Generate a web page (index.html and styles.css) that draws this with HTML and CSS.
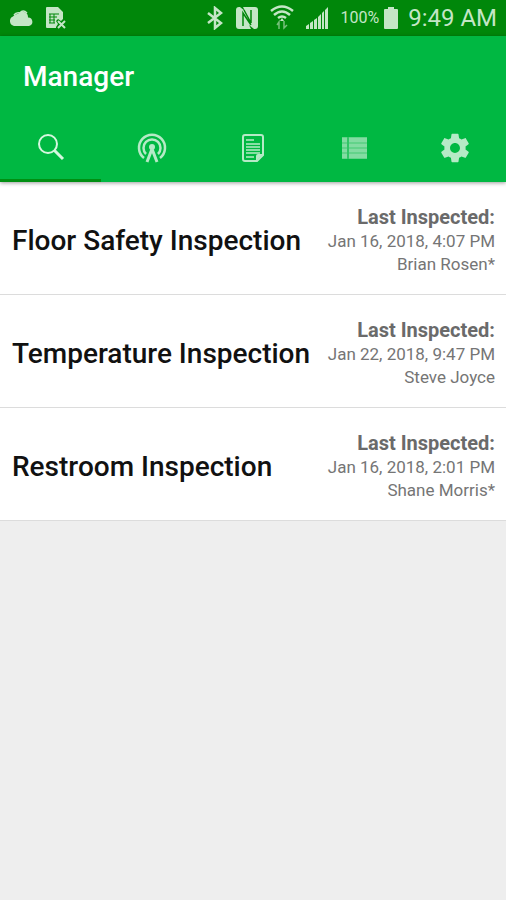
FILE: index.html
```html
<!DOCTYPE html>
<html lang="en">
<head>
    <meta charset="UTF-8">
    <meta name="viewport" content="width=device-width, initial-scale=1.0">
    <title>Manager</title>
    <link rel="stylesheet" href="styles.css">
</head>
<body>
    <div class="status-bar">
        <div class="status-left">
            <svg width="24" height="24" viewBox="0 0 24 24" fill="currentColor">
                <path d="M5 20a5 5 0 0 1-1-9.5a5 5 0 0 1 5-2.5a5.5 5.5 0 0 1 10 3.5a4.3 4.3 0 0 1 1 8.5z"></path>
                <path d="M5 9q2-3 6-2q3-4 7 0" fill="none" stroke="currentColor" stroke-width="1.5"></path>
            </svg>
            <svg width="24" height="24" viewBox="0 0 24 24">
                <path fill="currentColor" d="M4 1h11l5 5v7l-2 2l-3-2l-2 2l2 3l-2 3v1H4a1 1 0 0 1-1-1V2a1 1 0 0 1 1-1z"></path>
                <path d="M6 8h10M6 11h8M6 14h6M6 17h6M7 8v9M11 8v9" fill="none" stroke="#00870a" stroke-width="1"></path>
                <path d="M15 15l7 7M22 15l-7 7" fill="none" stroke="currentColor" stroke-width="2"></path>
            </svg>
        </div>
        <div class="status-right">
            <svg width="18" height="24" viewBox="0 0 18 24" fill="none" stroke="currentColor" stroke-width="2.5">
                <path d="M2 7l13 10l-6 5V2l6 5L2 17"></path>
            </svg>
            <svg width="24" height="24" viewBox="0 0 24 24">
                <rect x="1" y="1" width="22" height="22" rx="3" fill="currentColor"></rect>
                <path d="M8 20V7l8 12M16 4v13L9 4" fill="none" stroke="#00870a" stroke-width="1.5"></path>
                <path d="M5 1h3l2 4zM14 19l5 4h-3z" fill="#00870a"></path>
            </svg>
            <svg width="24" height="26" viewBox="0 0 24 26" fill="none" stroke="currentColor" stroke-width="2.5">
                <path d="M1 6q11-9 22 0M4 10q8-7 16 0M8 13q4-3 8 0"></path>
                <path d="M12 13l2 3h-4z" fill="currentColor" stroke="none"></path>
                <path d="M9 24v-7l-2 3M14 16v7l3-3" stroke-width="1.5" opacity="0.6"></path>
            </svg>
            <svg width="24" height="24" viewBox="0 0 24 24" fill="currentColor">
                <path d="M1 23v-3l3-2v5zM5 23v-6l3-2v8zM9 23v-9l3-2v11zM13 23V11l3-3v15zM17 23V7l2-2v18zM20 23V4l3-3v22z"></path>
            </svg>
            <span class="battery-level">100%</span>
            <svg width="16" height="24" viewBox="0 0 16 24" fill="currentColor">
                <path d="M5 1h6v2h3a1 1 0 0 1 1 1v18a1 1 0 0 1-1 1H2a1 1 0 0 1-1-1V4a1 1 0 0 1 1-1h3z"></path>
            </svg>
            <span class="clock">9:49 AM</span>
        </div>
    </div>

    <header class="header">
        <h1>Manager</h1>
        <nav class="tabs">
            <a class="tab active" href="#search" aria-label="Search">
                <svg width="32" height="32" viewBox="0 0 32 32" fill="none" stroke="currentColor">
                    <circle cx="13" cy="12" r="9" stroke-width="2"></circle>
                    <path d="M19 18l9 9" stroke-width="3"></path>
                </svg>
            </a>
            <a class="tab" href="#beacons" aria-label="Beacons">
                <svg width="32" height="32" viewBox="0 0 32 32" fill="none" stroke="currentColor" stroke-width="2.5">
                    <path d="M8 26A13 13 0 1 1 24 26"></path>
                    <path d="M10 22A8.5 8.5 0 1 1 22 22"></path>
                    <path d="M11 30l5-13l5 13" stroke-width="3"></path>
                    <circle cx="16" cy="15" r="3" fill="currentColor" stroke="none"></circle>
                </svg>
            </a>
            <a class="tab" href="#reports" aria-label="Reports">
                <svg width="32" height="32" viewBox="0 0 32 32" fill="none" stroke="currentColor" stroke-width="2">
                    <path d="M8 3h16a2 2 0 0 1 2 2v18l-6 6H8a2 2 0 0 1-2-2V5a2 2 0 0 1 2-2z"></path>
                    <path d="M9 8h8M9 12h14M9 15h14M9 18h14M9 21h14M9 25h8" stroke-width="1.5"></path>
                    <path d="M19 29v-5q0-2 2-2h5z" fill="currentColor" stroke="none"></path>
                </svg>
            </a>
            <a class="tab" href="#list" aria-label="List">
                <svg width="32" height="32" viewBox="0 0 32 32" fill="currentColor">
                    <path d="M4 5h25v22H4z" opacity="0.55"></path>
                    <path d="M4 6h5v4H4zM4 12h5v3H4zM4 17h5v3H4zM4 22h5v4H4zM11 6h18v4H11zM11 12h18v3H11zM11 17h18v3H11zM11 22h18v4H11z" opacity="0.4"></path>
                    <path d="M9 5h2v22H9z" fill="#00b842" opacity="0.5"></path>
                </svg>
            </a>
            <a class="tab" href="#settings" aria-label="Settings">
                <svg width="34" height="34" viewBox="0 0 24 24" fill="currentColor">
                    <path d="M19.43 12.98c.04-.32.07-.64.07-.98s-.03-.66-.07-.98l2.11-1.65c.19-.15.24-.42.12-.64l-2-3.46c-.12-.22-.39-.3-.61-.22l-2.49 1c-.52-.4-1.08-.73-1.69-.98l-.38-2.65C14.46 2.18 14.25 2 14 2h-4c-.25 0-.46.18-.49.42l-.38 2.65c-.61.25-1.17.59-1.69.98l-2.49-1c-.23-.09-.49 0-.61.22l-2 3.46c-.13.22-.07.49.12.64l2.11 1.65c-.04.32-.07.65-.07.98s.03.66.07.98l-2.11 1.65c-.19.15-.24.42-.12.64l2 3.46c.12.22.39.3.61.22l2.49-1c.52.4 1.08.73 1.69.98l.38 2.65c.03.24.24.42.49.42h4c.25 0 .46-.18.49-.42l.38-2.65c.61-.25 1.17-.59 1.69-.98l2.49 1c.23.09.49 0 .61-.22l2-3.46c.12-.22.07-.49-.12-.64l-2.11-1.65zM12 15.5c-1.93 0-3.5-1.57-3.5-3.5s1.57-3.5 3.5-3.5 3.5 1.57 3.5 3.5-1.57 3.5-3.5 3.5z"></path>
                </svg>
            </a>
        </nav>
    </header>

    <main class="inspections">
        <div class="inspection">
            <h2>Floor Safety Inspection</h2>
            <div class="details">
                <strong>Last Inspected:</strong>
                <p>Jan 16, 2018, 4:07 PM</p>
                <p>Brian Rosen*</p>
            </div>
        </div>
        <div class="inspection">
            <h2>Temperature Inspection</h2>
            <div class="details">
                <strong>Last Inspected:</strong>
                <p>Jan 22, 2018, 9:47 PM</p>
                <p>Steve Joyce</p>
            </div>
        </div>
        <div class="inspection">
            <h2>Restroom Inspection</h2>
            <div class="details">
                <strong>Last Inspected:</strong>
                <p>Jan 16, 2018, 2:01 PM</p>
                <p>Shane Morris*</p>
            </div>
        </div>
    </main>
</body>
</html>
```
FILE: styles.css
```css
* {
    box-sizing: border-box;
}
body {
    margin: 0;
    min-height: 100vh;
    background-color: #eeeeee;
    font-family: Roboto, sans-serif;
}
h1, h2, p {
    margin: 0;
}
svg {
    display: block;
    flex-shrink: 0;
}

.status-bar {
    display: flex;
    align-items: center;
    justify-content: space-between;
    height: 36px;
    padding: 0 9px;
    background-color: #00870a;
    color: #c4e6c6;
}
.status-left,
.status-right {
    display: flex;
    align-items: center;
    gap: 10px;
}
.status-right {
    gap: 11px;
}
.battery-level {
    font-size: 16px;
    margin-right: -7px;
}
.battery-level,
.clock {
    line-height: 38px;
    white-space: nowrap;
}
.clock {
    font-size: 24px;
    margin-left: -2px;
}

.header {
    position: relative;
    background-color: #00b842;
    color: #ffffff;
    box-shadow: 0 1px 4px rgba(0, 0, 0, 0.4);
}
.header h1 {
    padding: 24px 23px 20px;
    font-size: 28px;
    font-weight: 500;
    line-height: 34px;
}
.tabs {
    display: flex;
}
.tab {
    flex: 1;
    display: flex;
    align-items: center;
    justify-content: center;
    height: 68px;
    padding-top: 2px;
    border-bottom: 3px solid transparent;
    color: #b5eac6;
}
.tab.active {
    border-bottom-color: #008f12;
    color: #d5f7df;
}

.inspection {
    display: flex;
    align-items: center;
    justify-content: space-between;
    padding: 23px 11px 18px 12px;
    background-color: #ffffff;
    border-bottom: 1px solid #dcdcdc;
}
.inspection h2 {
    font-size: 28px;
    font-weight: 500;
    color: #111111;
}
.details {
    color: #757575;
    font-size: 17px;
    line-height: 23px;
    text-align: right;
    white-space: nowrap;
}
.details strong {
    display: block;
    font-size: 20px;
    line-height: 25px;
    color: #6a6a6a;
}
```
